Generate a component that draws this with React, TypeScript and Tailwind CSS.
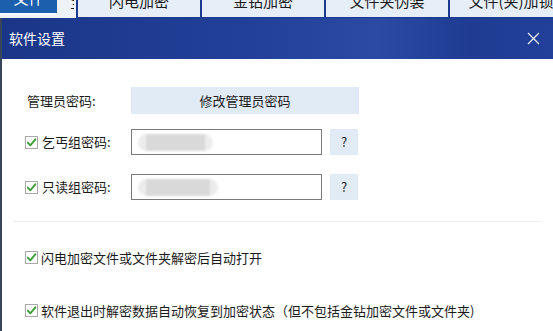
import React from "react";

const font = { fontFamily: '"Microsoft YaHei", "Noto Sans CJK SC", "Noto Sans", sans-serif' };

function Check() {
  return (
    <span className="inline-flex h-[13px] w-[13px] shrink-0 items-center justify-center border border-[#a9a9a9] bg-white">
      <svg width="11" height="11" viewBox="0 0 11 11">
        <path d="M1.8 5.6 L4.3 8.3 L9.3 2.3" fill="none" stroke="#3da03a" strokeWidth="1.9" strokeLinecap="round" strokeLinejoin="round" />
      </svg>
    </span>
  );
}

function Blur({ w }: { w: number }) {
  return (
    <div className="flex h-[17px] items-center">
      <div className="flex h-[17px] items-center rounded-full bg-[#ececec] px-[8px] blur-[1px]" style={{ width: w }}>
        <div className="h-[17px] w-full bg-[#d9d9d9]" />
      </div>
    </div>
  );
}

export default function App() {
  return (
    <div className="relative h-[331px] w-[553px] overflow-hidden bg-white text-[#1a1a1a]" style={font}>
      {/* top app strip */}
      <div className="flex h-[18px] bg-[#1c3a8e]">
        <div className="flex h-[18px] w-[76px] shrink-0 bg-[#eef3f8]">
          <div className="flex flex-col">
            <div className="flex h-[13px] w-[57px] items-start justify-center overflow-hidden bg-[#1b5fad] text-[15px] leading-[16px] text-white">
              <span className="-mt-[10px]">文件</span>
            </div>
            <div className="h-[2px] w-[57px] bg-white" />
          </div>
          <div className="ml-[13px] h-[10px] w-[4px] overflow-hidden text-[15px] leading-[16px]">
            <span className="-mt-[6px] block">宝</span>
          </div>
        </div>
        <div className="flex h-[18px] flex-1 gap-[2px] bg-[#1c3a8e] pl-[2px]">
          {["闪电加密", "金钻加密", "文件夹伪装", "文件(夹)加锁"].map((t) => (
            <div key={t} className="flex h-[17px] w-[122px] shrink-0 items-start justify-center overflow-hidden bg-[#e6eef7] text-[15px] leading-[16px] text-[#1a1a1a]">
              <span className="-mt-[7px]">{t}</span>
            </div>
          ))}
        </div>
      </div>

      {/* dialog */}
      <div className="flex h-[313px] flex-col border-l-2 border-[#38465a]">
        <div className="flex h-[41px] items-center justify-between bg-[linear-gradient(90deg,#1b3687_0%,#22409a_45%,#2a4aa4_68%,#1f3c92_85%,#22409a_100%)] pl-[7px] pr-[13px]">
          <span className="text-[14px] text-white">软件设置</span>
          <svg width="13" height="13" viewBox="0 0 13 13">
            <path d="M1 1 L12 12 M12 1 L1 12" stroke="#e6ecf6" strokeWidth="1.3" />
          </svg>
        </div>

        <div className="flex flex-col pt-[28px] text-[13px]">
          <div className="flex h-[27px] items-center pl-[25px]">
            <span className="w-[104px]">管理员密码:</span>
            <div className="flex h-[27px] w-[228px] items-center justify-center bg-[#e1ebf5]">修改管理员密码</div>
          </div>

          <div className="mt-[15px] flex h-[26px] items-center pl-[23px]">
            <Check />
            <span className="w-[93px] pl-[4px]">乞丐组密码:</span>
            <div className="flex h-[26px] w-[191px] items-center border border-[#7a7a7a] pl-[6px]">
              <Blur w={75} />
            </div>
            <div className="ml-[8px] flex h-[26px] w-[28px] items-center justify-center bg-[#e1ebf5]">?</div>
          </div>

          <div className="mt-[19px] flex h-[26px] items-center pl-[23px]">
            <Check />
            <span className="w-[93px] pl-[4px]">只读组密码:</span>
            <div className="flex h-[26px] w-[191px] items-center border border-[#7a7a7a] pl-[6px]">
              <Blur w={80} />
            </div>
            <div className="ml-[8px] flex h-[26px] w-[28px] items-center justify-center bg-[#e1ebf5]">?</div>
          </div>

          <div className="ml-[11px] mt-[21px] h-px w-[528px] bg-[#eeeeee]" />

          <div className="mt-[26px] flex items-center gap-[3px] pl-[23px]">
            <Check />
            <span>闪电加密文件或文件夹解密后自动打开</span>
          </div>

          <div className="mt-[33px] flex items-center gap-[3px] pl-[23px]">
            <Check />
            <span>软件退出时解密数据自动恢复到加密状态（但不包括金钻加密文件或文件夹)</span>
          </div>
        </div>
      </div>
    </div>
  );
}
